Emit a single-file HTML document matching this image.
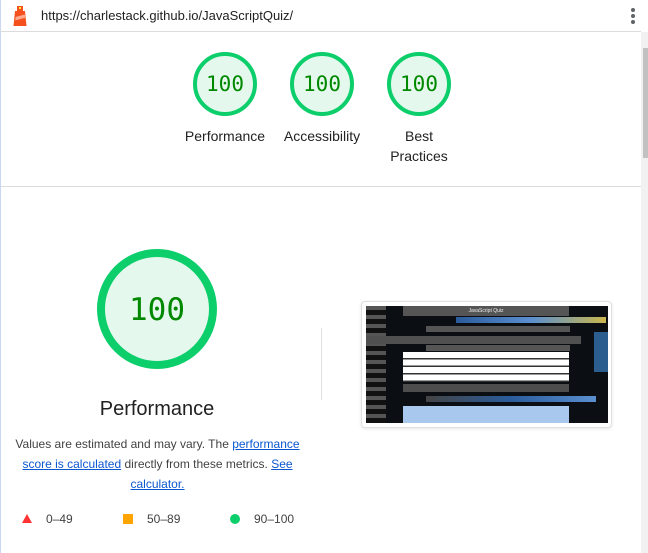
<!DOCTYPE html>
<html><head><style>
*{margin:0;padding:0;box-sizing:border-box}
body{width:648px;height:553px;overflow:hidden;background:#fff;font-family:"Liberation Sans",Arial,sans-serif;position:relative;color:#212121}
.abs{position:absolute}
.lbl{position:absolute;font-size:14px;color:#212121;text-align:center;width:100px;line-height:20px}
.num{font-family:"DejaVu Sans Mono","Liberation Mono",monospace;fill:#008800}
a{color:#0b57d0;text-decoration:underline}
</style></head><body>
<div class="abs" style="left:0;top:0;width:1px;height:553px;background:#c9d7f5"></div>
<div class="abs" style="left:0;top:31px;width:641px;height:1px;background:#dcdcdc"></div>
<svg class="abs" style="left:10px;top:4px" width="20" height="24" viewBox="0 0 20 24">
<rect x="7" y="2" width="6" height="5" fill="#f4511e"/><rect x="9" y="3" width="2" height="2" fill="#ffeb3b"/>
<path d="M5 7h10l1.5 15h-13z" fill="#f4511e"/><path d="M5.6 13l9.2-2.5.4 3.3-9.9 2.6z" fill="#ffab91"/>
</svg>
<div class="abs" style="left:41px;top:8px;font-size:13px;color:#212121">https://charlestack.github.io/JavaScriptQuiz/</div>
<div class="abs" style="left:631px;top:8px;width:4px;height:4px;border-radius:2px;background:#5f6368"></div>
<div class="abs" style="left:631px;top:14px;width:4px;height:4px;border-radius:2px;background:#5f6368"></div>
<div class="abs" style="left:631px;top:20px;width:4px;height:4px;border-radius:2px;background:#5f6368"></div>
<div class="abs" style="left:641px;top:32px;width:7px;height:521px;background:#f1f1f1"></div>
<div class="abs" style="left:643px;top:48px;width:5px;height:110px;background:#c1c1c1"></div>

<svg class="abs" style="left:0;top:0" width="641" height="553">
<g stroke="#0cce6b" stroke-width="4" fill="#e5f8ed">
<circle cx="225" cy="84" r="30"/><circle cx="322" cy="84" r="30"/><circle cx="419" cy="84" r="30"/>
</g>
<g class="num" font-size="21" text-anchor="middle">
<text x="225" y="91">100</text><text x="322" y="91">100</text><text x="419" y="91">100</text>
</g>
<circle cx="157" cy="309" r="56" stroke="#0cce6b" stroke-width="8" fill="#e5f8ed"/>
<text class="num" x="157" y="320" font-size="31" text-anchor="middle">100</text>
<path d="M27 514l5 9h-10z" fill="#f33"/>
<rect x="123" y="514" width="10" height="10" fill="#ffa400"/>
<circle cx="235" cy="519" r="5" fill="#0cce6b"/>
</svg>
<div class="lbl" style="left:175px;top:126px">Performance</div>
<div class="lbl" style="left:272px;top:126px">Accessibility</div>
<div class="lbl" style="left:369px;top:126px">Best<br>Practices</div>
<div class="abs" style="left:1px;top:186px;width:640px;height:1px;background:#dcdcdc"></div>

<div class="abs" style="left:57px;top:398px;width:200px;text-align:center;font-size:20px;color:#212121">Performance</div>
<div class="abs" style="left:10px;top:434px;width:295px;text-align:center;font-size:12px;line-height:20px;color:#424242">Values are estimated and may vary. The <a>performance score is calculated</a> directly from these metrics. <a>See calculator.</a></div>
<div class="abs" style="left:46px;top:512px;font-size:12px;color:#424242">0–49</div>
<div class="abs" style="left:147px;top:512px;font-size:12px;color:#424242">50–89</div>
<div class="abs" style="left:254px;top:512px;font-size:12px;color:#424242">90–100</div>

<div class="abs" style="left:321px;top:328px;width:1px;height:72px;background:#e0e0e0"></div>
<div class="abs" style="left:361px;top:301px;width:251px;height:127px;border:1px solid #e0e0e0;border-radius:4px;box-shadow:0 1px 3px rgba(0,0,0,.1)"></div>
<div class="abs" style="left:366px;top:306px;width:242px;height:117px;background:#0b0f14;overflow:hidden">
 <div class="abs" style="left:0;top:0;width:20px;height:117px;background:repeating-linear-gradient(#555 0 4px,#111 4px 9px)"></div>
 <div class="abs" style="left:37px;top:0;width:166px;height:10px;background:#555;color:#eee;font-size:5px;text-align:center;line-height:10px">JavaScript Quiz</div>
 <div class="abs" style="left:90px;top:11px;width:150px;height:6px;background:linear-gradient(90deg,#2a5c9c,#5b8fd0,#c9b64d)"></div>
 <div class="abs" style="left:60px;top:20px;width:144px;height:6px;background:#555"></div>
 <div class="abs" style="left:0;top:30px;width:215px;height:8px;background:#505050"></div>
 <div class="abs" style="left:60px;top:39px;width:144px;height:6px;background:#555"></div>
 <div class="abs" style="left:228px;top:26px;width:14px;height:40px;background:#2c5d8f"></div>
 <div class="abs" style="left:37px;top:46px;width:166px;height:30px;background:repeating-linear-gradient(#fff 0 6px,#333 6px 7.5px)"></div>
 <div class="abs" style="left:37px;top:78px;width:166px;height:8px;background:#4d4d4d"></div>
 <div class="abs" style="left:60px;top:90px;width:170px;height:6px;background:linear-gradient(90deg,#444,#2a5c9c,#5b8fd0)"></div>
 <div class="abs" style="left:37px;top:100px;width:166px;height:17px;background:#a8c8ee"></div>
</div>
</body></html>
